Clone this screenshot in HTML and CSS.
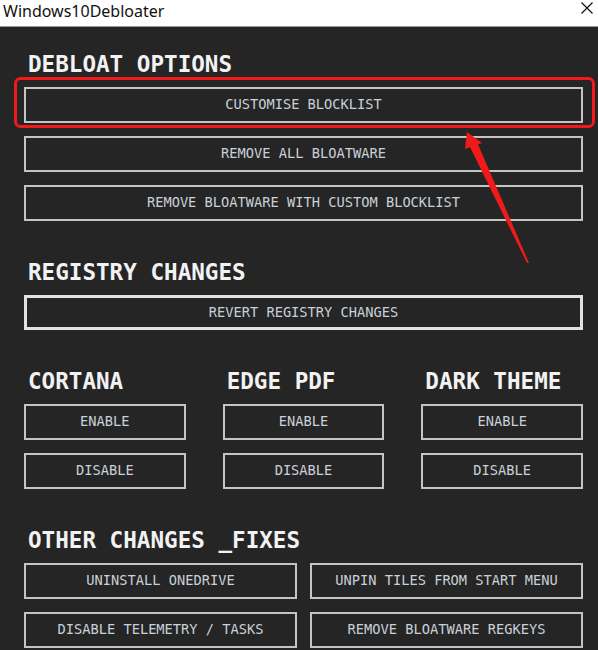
FILE: index.html
```html
<!DOCTYPE html>
<html lang="en">
<head>
  <meta charset="UTF-8" />
  <meta name="viewport" content="width=device-width, initial-scale=1.0" />
  <title>Windows10Debloater</title>
  <link rel="stylesheet" href="styles.css">
</head>
<body>

  <!-- Window title bar -->
  <div class="titlebar">
    <span class="title">Windows10Debloater</span>
    <svg class="close" width="12" height="12" viewBox="0 0 12 12">
      <path d="M0.5 0.5 L11.5 11.5 M11.5 0.5 L0.5 11.5" stroke="#111" stroke-width="1.2" fill="none" />
    </svg>
  </div>

  <main class="panel">

    <section class="group">
      <h2>DEBLOAT OPTIONS</h2>
      <div class="stack">
        <button class="btn">CUSTOMISE BLOCKLIST</button>
        <button class="btn">REMOVE ALL BLOATWARE</button>
        <button class="btn">REMOVE BLOATWARE WITH CUSTOM BLOCKLIST</button>
      </div>
    </section>

    <section class="group">
      <h2>REGISTRY CHANGES</h2>
      <div class="stack">
        <button class="btn btn-focus">REVERT REGISTRY CHANGES</button>
      </div>
    </section>

    <section class="group cols-3">
      <div class="col">
        <h2>CORTANA</h2>
        <div class="stack">
          <button class="btn">ENABLE</button>
          <button class="btn">DISABLE</button>
        </div>
      </div>
      <div class="col">
        <h2>EDGE PDF</h2>
        <div class="stack">
          <button class="btn">ENABLE</button>
          <button class="btn">DISABLE</button>
        </div>
      </div>
      <div class="col">
        <h2>DARK THEME</h2>
        <div class="stack">
          <button class="btn">ENABLE</button>
          <button class="btn">DISABLE</button>
        </div>
      </div>
    </section>

    <section class="group">
      <h2>OTHER CHANGES _FIXES</h2>
      <div class="grid-2">
        <button class="btn">UNINSTALL ONEDRIVE</button>
        <button class="btn">UNPIN TILES FROM START MENU</button>
        <button class="btn">DISABLE TELEMETRY / TASKS</button>
        <button class="btn">REMOVE BLOATWARE REGKEYS</button>
      </div>
    </section>

  </main>

  <!-- red callout drawn over the first button -->
  <svg class="callout" width="598" height="650" viewBox="0 0 598 650">
    <rect x="15.5" y="78.5" width="578" height="48" rx="5" fill="none" stroke="#f01a1a" stroke-width="3" />
    <polygon points="467,132 465,149 482,143" fill="#f01a1a" />
    <polygon points="469,145 477,142 529,263 527,263" fill="#f01a1a" />
  </svg>

</body>
</html>
```

FILE: styles.css
```css
* { box-sizing: border-box; }

html, body {
  margin: 0;
  padding: 0;
  width: 598px;
  height: 650px;
  overflow: hidden;
  background: #252525;
  position: relative;
}

.titlebar {
  height: 27px;
  background: #fff;
  border-bottom: 1px solid #9a9a9a;
  display: flex;
  justify-content: space-between;
  align-items: flex-start;
  padding: 0 5px 0 3px;
}

.title {
  font-family: 'Noto Sans', 'Liberation Sans', sans-serif;
  font-size: 16px;
  line-height: normal;
  color: #111;
}

.close {
  margin-top: 2px;
}

.panel {
  padding: 25px 15px 0 24px;
}

.group + .group {
  margin-top: 39px;
}

h2 {
  margin: 0 0 11px 4px;
  font-family: 'DejaVu Sans Mono', 'Liberation Mono', monospace;
  font-weight: bold;
  font-size: 22.6px;
  line-height: 24px;
  color: #f2f2f2;
  white-space: nowrap;
}

.stack {
  display: flex;
  flex-direction: column;
  gap: 13px;
}

.cols-3 {
  display: grid;
  grid-template-columns: repeat(3, 1fr);
  column-gap: 37px;
}

.grid-2 {
  display: grid;
  grid-template-columns: 1fr 1fr;
  column-gap: 13px;
  row-gap: 13px;
}

.btn {
  height: 36px;
  width: 100%;
  background: transparent;
  border: 2px solid #c4c4c4;
  color: #c9d0d8;
  font-family: 'DejaVu Sans Mono', 'Liberation Mono', monospace;
  font-size: 13.7px;
  padding: 0 0 2px;
  cursor: pointer;
}

.btn-focus {
  height: 35px;
  border: 3px solid #e2e2e2;
}

/* annotation layer */
.callout {
  position: absolute;
  top: 0;
  left: 0;
  pointer-events: none;
}
```
